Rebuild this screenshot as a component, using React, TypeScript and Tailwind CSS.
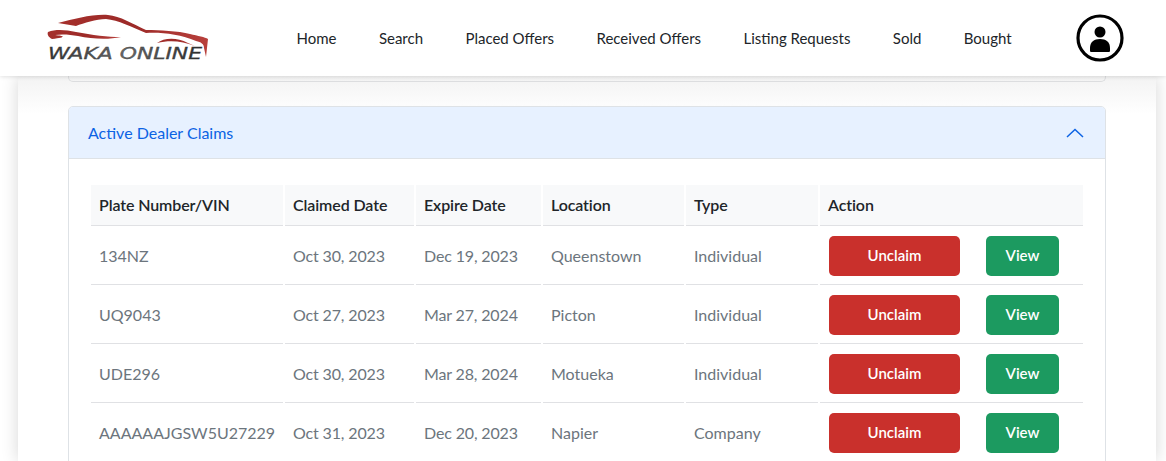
const rows = [
  { plate: '134NZ', claimed: 'Oct 30, 2023', expire: 'Dec 19, 2023', location: 'Queenstown', type: 'Individual' },
  { plate: 'UQ9043', claimed: 'Oct 27, 2023', expire: 'Mar 27, 2024', location: 'Picton', type: 'Individual' },
  { plate: 'UDE296', claimed: 'Oct 30, 2023', expire: 'Mar 28, 2024', location: 'Motueka', type: 'Individual' },
  { plate: 'AAAAAAJGSW5U27229', claimed: 'Oct 31, 2023', expire: 'Dec 20, 2023', location: 'Napier', type: 'Company' },
]

const links = ['Home', 'Search', 'Placed Offers', 'Received Offers', 'Listing Requests', 'Sold', 'Bought']
const heads = ['Plate Number/VIN', 'Claimed Date', 'Expire Date', 'Location', 'Type', 'Action']

function Logo() {
  return (
    <svg width="164" height="50" viewBox="46 14 164 50" className="shrink-0">
      <defs>
        <linearGradient id="car" x1="0" x2="1" y1="0" y2="0">
          <stop offset="0" stopColor="#a5302c" />
          <stop offset="0.5" stopColor="#9c2a28" />
          <stop offset="1" stopColor="#b8403c" />
        </linearGradient>
        <linearGradient id="word" x1="0" x2="1" y1="0" y2="0">
          <stop offset="0" stopColor="#333333" />
          <stop offset="0.5" stopColor="#6a6a6a" />
          <stop offset="1" stopColor="#2a2a2a" />
        </linearGradient>
      </defs>
      <path d="M58 24C75 20 92 15 108 16C120 17 133 25 146 31C160 31 178 32 190 35C198 37 205 38 208 40L206 58L204 49C204 45 201 43 196 42C180 35 160 33 146 34C132 28 118 21 106 20C96 20 84 24 76 27C70 26 64 25 58 24Z" fill="url(#car)" />
      <path d="M48 33C56 30 66 31 76 33C92 36 108 38 121 38C108 41 92 40 78 37C70 35.500 62 35 55 36C64 37 68 38 52 40C48 38 47 35 48 33Z" fill="url(#car)" />
      <path d="M157 44C164 39 176 38 188 44L195 47C182 42 170 41 157 44Z" fill="url(#car)" />
      <text x="48" y="60" fontFamily="'DejaVu Sans', sans-serif" fontSize="16" fontStyle="italic" textLength="154" lengthAdjust="spacingAndGlyphs" fill="url(#word)" stroke="#333" strokeWidth="0.300">WAKA ONLINE</text>
    </svg>
  )
}

function ProfileIcon() {
  return (
    <svg width="48" height="48" viewBox="0 0 48 48">
      <circle cx="24" cy="24" r="22" fill="none" stroke="#000" strokeWidth="3.200" />
      <circle cx="24" cy="18" r="5.500" fill="#000" />
      <path d="M15 38C14 38 14 37 14 36V34C14 28 18 25 24 25C30 25 34 28 34 34V36C34 37 34 38 33 38Z" fill="#000" />
    </svg>
  )
}

const cell = 'border-b border-[#e0e1e4] px-2 pt-[2px]'

export default function App() {
  return (
    <div className="h-[461px] w-[1166px] overflow-hidden bg-white font-['Lato',sans-serif] text-base">
      <header className="relative z-10 flex h-[76px] items-center bg-white pl-[46px] pr-[42px] shadow-[0_1px_4px_rgba(0,0,0,0.12)]">
        <Logo />
        <nav className="ml-[86.500px] flex gap-[42.400px] text-[15px] text-[#212529]">
          {links.map((l) => (
            <a key={l} href="#" className="whitespace-nowrap">{l}</a>
          ))}
        </nav>
        <div className="ml-auto flex">
          <ProfileIcon />
        </div>
      </header>

      <main className="ml-[18px] mr-[10px] h-[385px] bg-gradient-to-b from-[#f3f3f3] to-white to-[38px] px-[50px] shadow-[0_0_16px_rgba(0,0,0,0.16)]">
        <div className="h-[6px] rounded-b-[5px] border border-t-0 border-[#dcdddf]" />

        <section className="mt-[24px] overflow-hidden rounded-t-[5px] border border-[#dee2e6] bg-white">
          <div className="flex h-[52px] items-center justify-between border-b border-[#dee2e6] bg-[#e7f1ff] pl-[19px] pr-[21px] text-[#0c63e4]">
            <span>Active Dealer Claims</span>
            <svg width="18" height="10" viewBox="0 0 18 10" fill="none" stroke="currentColor" strokeWidth="1.500">
              <path d="M1 9L9 1.500L17 9" />
            </svg>
          </div>

          <div className="px-[20px] pt-[26px]">
            <table className="w-full table-fixed border-separate border-spacing-x-[2px] border-spacing-y-0">
              <colgroup>
                <col className="w-[192px]" />
                <col className="w-[129px]" />
                <col className="w-[125px]" />
                <col className="w-[141px]" />
                <col className="w-[132px]" />
                <col />
              </colgroup>
              <thead>
                <tr>
                  {heads.map((h) => (
                    <th key={h} className="h-[41px] border-b border-[#e0e1e4] bg-[#f8f9fa] px-2 text-left font-semibold tracking-[-0.1px] text-[#212529]">{h}</th>
                  ))}
                </tr>
              </thead>
              <tbody className="text-[#6c757d]">
                {rows.map((r) => (
                  <tr key={r.plate}>
                    <td className={`h-[59px] whitespace-nowrap ${cell}`}>{r.plate}</td>
                    <td className={`tracking-[-0.15px] ${cell}`}>{r.claimed}</td>
                    <td className={`tracking-[-0.15px] ${cell}`}>{r.expire}</td>
                    <td className={cell}>{r.location}</td>
                    <td className={cell}>{r.type}</td>
                    <td className={cell}>
                      <div className="ml-px flex gap-[26px]">
                        <button type="button" className="h-10 w-[131px] rounded-[5px] bg-[#c9302c] pb-[2px] text-[15px] font-semibold text-white">Unclaim</button>
                        <button type="button" className="h-10 w-[73px] rounded-[5px] bg-[#1c9a60] pb-[2px] text-[15px] font-semibold text-white">View</button>
                      </div>
                    </td>
                  </tr>
                ))}
              </tbody>
            </table>
          </div>
        </section>
      </main>
    </div>
  )
}
